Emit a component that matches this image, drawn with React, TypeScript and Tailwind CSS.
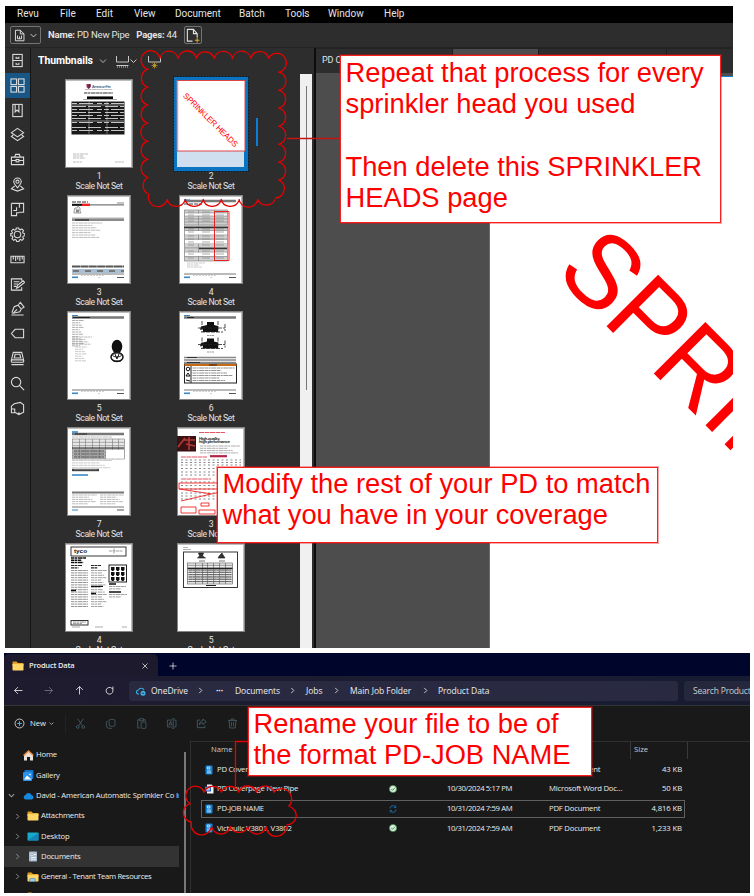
import React from "react";

type Kids = { children?: React.ReactNode };

const REVU = "font-[Roboto,'Liberation_Sans',sans-serif]";
const EXPL = "font-['Open_Sans','Noto_Sans',sans-serif]";
const NOTE = "font-['Liberation_Sans',Arial,sans-serif]";

/* ---------- rail icons ---------- */
const railIcons: React.ReactNode[] = [
  <><rect x="3" y="1.500" width="10" height="13" /><path d="M3 8h10M6.500 4v1.500h3V4M6.500 10.500V12h3v-1.500" /></>,
  <><rect x="1" y="1" width="6" height="6" /><rect x="9" y="1" width="6" height="6" /><rect x="1" y="9" width="6" height="6" /><rect x="9" y="9" width="6" height="6" /></>,
  <><rect x="3" y="1.500" width="10" height="13" /><path d="M5.500 1.500v8l2-2 2 2v-8" /></>,
  <><path d="M8 1.500 14.500 6 8 10.500 1.500 6Z" /><path d="m3.500 8.500-2 1.500L8 14.500l6.500-4.500-2-1.500" /></>,
  <><path d="M1.500 5.500h13v8h-13ZM5 5.500l1-3h4l1 3M1.500 9h5m3 0h5" /><rect x="6.500" y="8" width="3" height="2.500" /></>,
  <><path d="M8 11.500C5 8 4 6.800 4 5a4 4 0 0 1 8 0c0 1.800-1 3-4 6.500Z" /><circle cx="8" cy="5" r="1.700" /><path d="M5 9.500 1.500 12.500 8 15l6.500-2.500L11 9.500" /></>,
  <path d="M7 5.500V9H3.500M1.500 1.500h13v9.500H10M1.500 1.500v13H7V11.500h3M10 1.500V6" />,
  <><circle cx="8" cy="8" r="3.500" /><path d="m6.700 1-.3 1.800-1.500.6-1.500-1-1.800 1.900 1 1.500-.6 1.300L.8 7v2.400l1.700.3.600 1.300-1 1.500 1.800 1.800 1.500-1 1.300.600.400 1.500h2.500l.400-1.500 1.300-.6 1.500 1 1.800-1.800-1-1.500.6-1.300 1.600-.4V7l-1.700-.3-.6-1.300 1-1.500L12.600 2l-1.500 1-1.400-.6L9.300 1Z" /></>,
  <path d="M1 4.500h14v7H1ZM3.500 4.500v3.500M6 4.500v5M8.300 4.500v3.500M10.500 4.500v5M13 4.500v3.500" />,
  <><path d="M12.500 4V2h-11v12h11V11M4 5h6M4 7.500h4.500M4 10h3" /><path d="m7 12 1-3 6-5 1.500 1.700-6 5Z" /></>,
  <path d="M1.500 15h13M2 12.500l2.500-6.500 4-1.500 3.500 4-1.500 3-7 1.500 4-4M9 4l2-2.500 4 5-2.500 1.500" />,
  <path d="M5.500 3.500h9v9h-9L1.500 8Z" />,
  <><path d="M3.500 1.500h9l2 8h-13ZM1.500 12h13M1.500 14.500h13" /><path d="M5.500 3.500h5l1 4h-7ZM1.500 9.500V12m13-2.500V12" /></>,
  <><circle cx="6.500" cy="6.500" r="5" /><path d="m10 10 5 5" /></>,
  <path d="M1.500 13V8.500H5V12l4.500 2.500 5-2.500V4L11 1.500 4.500 3 1.500 5.500v3M5 12.500H1.500M9.500 14.500V12" />,
];

const Ico = ({ s = 16, children, className = "" }: Kids & { s?: number; className?: string }) => (
  <svg width={s} height={s} viewBox="0 0 16 16" fill="none" stroke="currentColor" strokeWidth="1.150" className={"shrink-0 " + className}>
    {children}
  </svg>
);

/* ---------- page thumbnails ---------- */
type TL = { x: number; y: number; w: number; n: number; gap?: number; c?: string; h?: number; jag?: boolean };
const Txt = ({ x, y, w, n, gap = 2.4, c = "#8a8a8a", h = 0.8, jag = true }: TL) => (
  <g stroke={c} strokeWidth={h} strokeDasharray="3.5 .5 2 .6 5 .5">
    {Array.from({ length: n }, (_, i) => (
      <path key={i} d={`M${x} ${y + i * gap}h${jag ? w * (1 - ((i * 37) % 10) / 22) : w}`} />
    ))}
  </g>
);
const Table = ({ x, y, w, h, rows, cols, fill = "#d0d0d0", c = "#777" }: { x: number; y: number; w: number; h: number; rows: number; cols: number[]; fill?: string; c?: string }) => (
  <g>
    <rect x={x} y={y} width={w} height={h} fill={fill} stroke={c} strokeWidth=".6" />
    {Array.from({ length: rows - 1 }, (_, i) => (
      <path key={i} d={`M${x} ${y + ((i + 1) * h) / rows}h${w}`} stroke={c} strokeWidth=".6" />
    ))}
    {cols.map((k) => <path key={k} d={`M${x + k} ${y}v${h}`} stroke={c} strokeWidth=".6" />)}
  </g>
);
const Foot = () => (
  <g>
    <path d="M5 79h52" stroke="#777" strokeWidth="1" />
    <path d="M5 82.300h6" stroke="#3b86c8" strokeWidth="1.600" />
    <path d="M14 80.500h24M31 82.500h2" stroke="#bbb" strokeWidth=".7" strokeDasharray="2 1" />
    <path d="M50 82.500h7" stroke="#555" strokeWidth="1" />
  </g>
);

const Page = ({ w, children }: Kids & { w: number }) => (
  <svg width={w} height="89" viewBox={`0 0 ${w} 89`} className="block">
    <rect x=".5" y=".5" width={w - 1} height="88" fill="#bdbdbd" stroke="#858585" />
    <rect x="1" y="2" width={w - 3} height="86" fill="#fff" />
    {children}
  </svg>
);

const pages: React.ReactNode[] = [
  <Page w={68}>
    <path d="M21.500 5h4v3l-2 2-2-2Z" fill="#b24" /><path d="M23.500 5h2v3l-2 2" fill="#336" />
    <text x="27" y="9" fontSize="4" className={NOTE} fill="#25436b" textLength="19">American Fire</text>
    <Txt x={20} y={10.500} w={27} n={1} c="#aaa" jag={false} />
    <Txt x={19} y={14} w={29} n={1} c="#333" jag={false} h={1} />
    <path d="M22 18.700h26" stroke="#000" strokeWidth="2.500" /><path d="M18 20.500h34" stroke="#777" strokeWidth=".6" />
    <rect x="6.500" y="22.500" width="53" height="33" fill="#1a1a1a" />
    <g stroke="#c4c4c4" strokeWidth="1">
      {[24.500, 27.500, 30.500, 33.500, 36.500, 39.500, 43.500, 48.500, 51.500].map((y, i) => <path key={y} d={`M7 ${y}h52`} strokeDasharray={i % 2 ? "14 2 13 4 13 2" : "5 2 14 4 5 2"} />)}
      <path d="M24 23v32M42 23v32" strokeWidth=".5" />
    </g>
    <path d="M7 26h52M7 42h52" stroke="#888" strokeWidth="1" />
    <Txt x={8} y={75} w={15} n={3} c="#aaa" gap={2} /><Txt x={8} y={83} w={9} n={1} c="#aaa" /><Txt x={50} y={83} w={9} n={1} c="#aaa" />
  </Page>,
  null,
  <Page w={64}>
    <path d="M5 7h16" stroke="#333" strokeWidth="1.200" strokeDasharray="4 1" /><path d="M5 9.800h52" stroke="#777" strokeWidth="1.200" /><path d="M5 9.800h10" stroke="#111" strokeWidth="2" /><path d="M15 9.800h8" stroke="#e22" strokeWidth="2.400" />
    <path d="M50 8h7" stroke="#888" /><path d="M7 18v-2l1-3h2l1-2 2 2v3l1 2Z" fill="#eee" stroke="#777" strokeWidth=".7" /><path d="M9 14.500h3v3H9Z" fill="#888" />
    <path d="M5 23.200h52" stroke="#888" strokeWidth="1" /><path d="M5 25h52" stroke="#8a8a8a" strokeWidth="1.800" /><path d="M8 25h14" stroke="#111" />
    <Txt x={5} y={28} w={30} n={7} c="#aaa" />
    <path d="M5 71.500h52" stroke="#555" strokeWidth="2" strokeDasharray="8 .4" />
    <path d="M5 76h52" stroke="#a8bfd6" strokeWidth="4" /><path d="M6 76h51" stroke="#777" strokeWidth="2" strokeDasharray="6 6" />
    <Foot />
  </Page>,
  <Page w={64}>
    <path d="M5 6h52" stroke="#777" strokeWidth="2.400" /><path d="M5 5h6" stroke="#3b86c8" strokeWidth="1.200" /><path d="M5 9h18" stroke="#444" strokeDasharray="4 1" />
    <Table x={5.500} y={15} w={43} h={15} rows={5} cols={[14, 30]} /><Table x={5.500} y={31} w={43} h={35} rows={8} cols={[14, 30]} />
    <g fill="#fff"><rect x="6" y="18.500" width="42" height="2" /><rect x="6" y="36" width="42" height="3.500" /><rect x="6" y="45" width="42" height="3.500" /><rect x="6" y="57.500" width="42" height="3.500" /></g>
    <g stroke="#888" strokeWidth=".7">{[17, 20, 23, 26, 34, 37, 41, 44, 47, 50, 56, 59, 63].map((y) => <path key={y} d={`M9 ${y}h38`} strokeDasharray="6 8 8 6 8 5" />)}</g>
    <path d="M5 32.500h44M20 53.500h28" stroke="#333" strokeWidth="1.300" />
    <path d="M35.500 16.500h14.500v49h-14.500Z" fill="none" stroke="#e11" strokeWidth=".9" />
    <Txt x={8} y={68} w={18} n={3} c="#bbb" gap={2} /><Foot />
  </Page>,
  <Page w={64}>
    <path d="M5 6.500h52" stroke="#777" strokeWidth="2.400" /><path d="M6 6.500h17" stroke="#222" /><path d="M5 4.500h6" stroke="#3b86c8" strokeWidth="1" />
    <Txt x={5} y={9.500} w={12} n={12} c="#999" gap={2.300} /><Txt x={5} y={26} w={20} n={4} c="#aaa" /><Txt x={8} y={36} w={12} n={7} c="#bbb" gap={2.300} />
    <ellipse cx="50" cy="35.500" rx="5.300" ry="6.800" fill="#111" /><ellipse cx="50" cy="46" rx="6" ry="4.500" fill="#fff" stroke="#111" strokeWidth="1.500" /><ellipse cx="50" cy="44" rx="4.500" ry="2" fill="none" stroke="#333" /><path d="M46 50h8M48 43l2 5 2-5" stroke="#111" fill="none" />
    <Foot />
  </Page>,
  <Page w={64}>
    <path d="M5 6.500h52" stroke="#777" strokeWidth="2.400" /><path d="M8 6.500h7" stroke="#222" /><path d="M5 4.500h6" stroke="#3b86c8" />
    {[10, 26.500].map((y) => <g key={y} transform={`translate(0 ${y})`}><path d="M22 5.500 28 4V1h7v3l4 1v6H24V8l-3 1Z" fill="#111" /><path d="M19 7h27M23 0v11M39 0v11M22 11h22M46 3v7" stroke="#222" strokeWidth=".8" strokeDasharray="4 1" /><path d="M28 14.500h7" stroke="#999" strokeDasharray="2 .5" /></g>)}
    <path d="M5 46.500h52M5 49h52M5 51.500h52" stroke="#888" strokeWidth="1.400" /><path d="M8 46.500h10M8 51.500h13" stroke="#333" />
    <rect x="5.500" y="53" width="52" height="19" fill="#fff" stroke="#222" /><path d="M5.500 54h52" stroke="#c56a15" strokeWidth="2" /><path d="M30 54h8" stroke="#321" /><path d="M12 55v17" stroke="#222" />
    <circle cx="9" cy="58" r="1.800" fill="none" stroke="#111" /><path d="m7 65 2-3 2 3Zm0 4 4 1" stroke="#111" fill="none" />
    <Txt x={13.500} y={57} w={42} n={6} gap={2.500} c="#777" /><Foot />
  </Page>,
  <Page w={64}>
    <path d="M5 7h52" stroke="#777" strokeWidth="2.400" /><path d="M8 7h12" stroke="#222" strokeDasharray="3 .4" /><path d="M5 5h6M5 48h16" stroke="#2e84c9" strokeWidth="1.300" />
    <Txt x={5} y={10} w={40} n={1} c="#aaa" />
    <Table x={5.500} y={12} w={52} h={20} rows={6} cols={[7, 13, 20, 27, 33, 40, 46]} fill="#e8e8e8" /><rect x="5.500" y="22" width="33" height="10" fill="#999" opacity=".6" /><rect x="39" y="23" width="18" height="8.500" fill="#fff" />
    <path d="M5 21h52" stroke="#222" /><Txt x={7} y={24} w={30} n={3} gap={3} c="#333" jag={false} /><Txt x={5} y={33.500} w={40} n={4} c="#bbb" />
    <path d="M5 43h27" stroke="#444" strokeWidth="2.400" /><path d="M7 42h23" stroke="#ddd" strokeWidth=".6" />
    <path d="M5 65.500h52" stroke="#777" strokeWidth="2" /><Txt x={5} y={68} w={25} n={5} gap={2.200} c="#aaa" /><Txt x={33} y={68} w={24} n={5} gap={2.200} c="#aaa" />
    <path d="M5 80h52" stroke="#777" /><path d="M5 83h6" stroke="#3b86c8" /><path d="M50 83h7" stroke="#555" />
  </Page>,
  <Page w={68}>
    <path d="M22 5.500h26M4 30h26M4 52h30" stroke="#d45" strokeWidth=".9" strokeDasharray="5 .5" />
    <rect x="0" y="9" width="19" height="15.500" fill="#3a1214" /><path d="m1 20 7-9M6 13h12M9 17l9 2M12 10v13" stroke="#b33a3a" strokeWidth="1.600" fill="none" />
    <text x="22" y="12.800" fontSize="4.200" fontWeight="700" className={NOTE} fill="#222" textLength="21">High-quality,</text>
    <text x="22" y="16.300" fontSize="4.200" fontWeight="700" className={NOTE} fill="#222" textLength="31">high performance</text>
    <Txt x={23} y={19} w={40} n={4} gap={2.300} c="#999" /><path d="M33 29.200h17" stroke="#b22345" strokeWidth="2.200" />
    <g stroke="#888" strokeWidth="1" strokeDasharray="2 2.500">{[33, 35.500, 38, 41.500, 45, 48, 55, 58.500, 62, 66, 69, 72].map((y) => <path key={y} d={`M4 ${y}h60`} />)}</g>
    <path d="M2 56h62v6H2ZM2 62l33 5 30-8M4 74l30-7M4 80h15v6H4ZM22 83h16v4H22Zm2-7h8v3h-8Z" stroke="#e22" strokeWidth=".9" fill="none" />
  </Page>,
  <Page w={68}>
    <rect x="6" y="4" width="55" height="9" fill="#fff" stroke="#222" strokeWidth=".9" />
    <text x="9" y="10" fontSize="6" fontWeight="700" className={NOTE} fill="#111" textLength="13" lengthAdjust="spacingAndGlyphs">tyco</text>
    <path d="M44 8h14M49 5.500v5" stroke="#888" strokeWidth=".8" strokeDasharray="3 .5" />
    <Txt x={6} y={15} w={15} n={3} gap={2.300} c="#111" h={1.500} />
    <Txt x={6} y={22.500} w={11} n={2} gap={2.300} c="#222" h={1.200} /><Txt x={26} y={22.500} w={10} n={2} gap={2.300} c="#222" h={1.200} />
    <Txt x={6} y={27.500} w={17} n={16} gap={2.400} c="#777" jag={false} /><Txt x={26} y={27.500} w={16} n={16} gap={2.400} c="#888" />
    <path d="M6 47.500h5M26 43.300h12M26 50.500h5M44 41h7M44 49h12" stroke="#111" strokeWidth="1.300" />
    <rect x="44" y="22" width="17.500" height="17" fill="#fff" stroke="#222" /><g fill="#111">{[0, 1, 2].flatMap((r) => [0, 1, 2].map((k) => <path key={`${r}${k}`} d={`M${46 + k * 5} ${24 + r * 5}h3.500v2.500l-1 1.500h-1.500l-1-1.500Z`} />))}</g>
    <Txt x={44} y={43.500} w={17} n={2} c="#888" /><Txt x={44} y={51.500} w={18} n={2} c="#888" />
    <rect x="6" y="77.500" width="17" height="4.500" fill="#fff" stroke="#222" strokeWidth=".9" /><Txt x={8} y={79} w={13} n={2} gap={1.600} c="#777" /><path d="M7 84h8M30 84h8M57 84h5" stroke="#888" strokeWidth=".7" />
  </Page>,
  <Page w={68}>
    <path d="M6 4.500h5M6 6.500h8" stroke="#999" strokeWidth=".7" /><rect x="6.500" y="9" width="54" height="35.500" fill="#fff" stroke="#222" strokeWidth=".9" />
    <path d="m20.500 15 2-2-1-3h5l-1 3 3 2ZM41 15l2-3 2-2 1 2 2 3Z" fill="#333" stroke="#111" strokeWidth=".6" /><path d="M22 18h6M42 18h6" stroke="#555" strokeWidth=".8" />
    <Table x={10.500} y={20} w={45} h={21} rows={9} cols={[8, 15, 20, 26, 32, 38]} fill="#eee" c="#555" /><Txt x={12} y={27} w={42} n={6} gap={2.300} c="#555" jag={false} /><path d="M10.500 25.500h45M29 42.500h10" stroke="#222" />
  </Page>,
];

const SelectedPage = () => (
  <svg width="76" height="96" viewBox="0 0 76 96" className="block shrink-0">
    <rect x=".5" y=".5" width="75" height="95" fill="#0a74c2" stroke="#161616" strokeDasharray="2 1" />
    <rect x="4" y="4" width="67" height="87" fill="#d0dff0" />
    <rect x="4" y="4" width="68" height="71" fill="#fff" />
    <path d="M4.500 4v71" stroke="#f88" strokeWidth="1.500" /><path d="M4 4.500h68V75H4" stroke="#d44" fill="none" />
    <text x="0" y="0" transform="translate(9.500 20.300) rotate(44.500)" fontSize="8.200" fill="#f00" textLength="73" className={NOTE}>SPRINKLER HEADS</text>
  </svg>
);

const labels = ["1", "2", "3", "4", "5", "6", "7", "3", "4", "5"];

const RevuWindow = () => (
  <section className={"ml-[5px] flex h-[642px] w-[728px] shrink-0 flex-col overflow-hidden bg-[#2d2d2d] text-[10px] text-[#e4e4e4] " + REVU}>
    <nav className="flex h-[17px] shrink-0 items-center bg-black pb-[2px] pl-3">
      <span className="w-[43px]">Revu</span><span className="w-[36px]">File</span><span className="w-[38px]">Edit</span><span className="w-[41px]">View</span>
      <span className="w-[64px]">Document</span><span className="w-[46px]">Batch</span><span className="w-[43px]">Tools</span><span className="w-[56px]">Window</span><span>Help</span>
    </nav>
    <div className="flex h-[25px] shrink-0 items-center border-b border-[#232323] pl-[5px]">
      <div className="flex h-[18px] w-[31px] items-center justify-between rounded-[2px] border border-[#737373] px-[2px]">
        <Ico s={13}><path d="M3 1.500h6L13.500 6v8.500H3ZM9 1.500V6h4.500M5.500 8v4h5V8M8 9v3" /></Ico>
        <Ico s={9}><path d="m3 5.500 5 5 5-5" strokeWidth="1.500" /></Ico>
      </div>
      <span className="ml-[7px] text-[9.500px] tracking-[-0.200px]"><b className="font-bold">Name:</b> PD New Pipe</span>
      <span className="ml-[7px] text-[9.500px] tracking-[-0.200px]"><b className="font-bold">Pages:</b> 44</span>
      <div className="ml-[7px] flex h-[18px] w-[18px] items-center justify-center rounded-[2px] border border-[#737373]">
        <Ico s={15}><path d="M8 14H2.500V1.500H9L13 6v4M9 1.500V6h4" /><path d="M10.500 13h5M13 10.500v5" stroke="#d8ac22" /></Ico>
      </div>
    </div>
    <div className="flex min-h-0 flex-1">
      <aside className="flex w-[25px] shrink-0 flex-col">
        {railIcons.map((ic, i) => (
          <div key={i} className={"flex h-[24.850px] shrink-0 items-center justify-center pr-px text-[#dcdcdc] " + (i === 1 ? "bg-[#175685]" : "")}>
            <Ico s={15}>{ic}</Ico>
          </div>
        ))}
      </aside>
      <div className="w-px shrink-0 bg-[#151515]" />
      <div className="w-[269px] shrink-0">
        <div className="flex h-[26px] items-center pl-[7px]">
          <b className="text-[10.500px] font-bold tracking-[-0.080px] text-white">Thumbnails</b>
          <Ico s={8} className="ml-[6px]"><path d="m2 5 6 6 6-6" strokeWidth="1.500" /></Ico>
          <svg width="46" height="16" viewBox="0 0 46 16" fill="none" stroke="#c8c8c8" className="ml-[8px]">
            <path d="M1.500 3v6h12V3M1.500 12.500h12" /><path d="M2 14h11" strokeDasharray="1 1" /><path d="m15.500 6.500 3 3 3-3" />
            <path d="M33.500 3v6h12V3" /><path d="M36.500 12.500h6M39.500 9.500v6M37.500 10.500l4 4M41.500 10.500l-4 4" stroke="#c8a028" strokeWidth=".8" />
          </svg>
        </div>
        <div className="grid grid-cols-[112px_112px] pl-[12px] pt-[5px]">
          {labels.map((n, i) => (
            <div key={i} className="flex h-[116px] flex-col items-center">
              <div className="flex h-[89px] items-center justify-center overflow-visible">{i === 1 ? <SelectedPage /> : pages[i]}</div>
              <div className="mt-[3px] text-center text-[8.700px] leading-[10px] tracking-[-0.400px]">{n}<br />Scale Not Set</div>
            </div>
          ))}
        </div>
      </div>
      <div className="mt-[26px] w-[12px] shrink-0 bg-[#f0f0f0] pl-[6px] pt-[12px]"><div className="h-[304px] w-px bg-[#777]" /></div>
      <div className="flex w-[4px] shrink-0 pl-[2px]"><div className="w-[2px] bg-[#0d0d0d]" /></div>
      <main className="flex min-w-0 flex-1 flex-col bg-[#4d4d4d]">
        <div className="flex h-[25px] shrink-0 gap-px border-t border-[#232323] bg-[#1e1e1e] text-[9px] leading-[23px]">
          <div className="w-[136px] bg-[#2d2d2d] pl-[6px] tracking-[-0.100px]">PD C</div><div className="w-[85px] bg-[#4d4d4d]" /><div className="w-[127px] bg-[#2d2d2d]" /><div className="flex-1 bg-[#2d2d2d]" />
        </div>
        <div className="ml-[173px] mt-[3px] flex-1 border-l border-t border-[#1584d8] bg-white">
          <svg width="243" height="571" viewBox="490 77 243 571" className="block">
            <text transform="translate(553.700 273.400) rotate(45) scale(1 1.060)" fontSize="100" fill="#f00" className={NOTE}>SPRIN</text>
          </svg>
        </div>
      </main>
    </div>
  </section>
);

/* ---------- file explorer ---------- */
const Folder = () => (
  <svg width="12" height="10" viewBox="0 0 12 10" className="shrink-0"><path d="M.5 1q0-.5.5-.5h3.500L6 2h5q.5 0 .5.500V5H.5Z" fill="#dd9c1c" /><rect x=".5" y="2.800" width="11" height="6.700" rx=".7" fill="#ffd769" /></svg>
);
const Pdf = () => (
  <svg width="8" height="10" viewBox="0 0 8 10" className="shrink-0"><rect x=".5" y=".5" width="7" height="9" rx="1" fill="#1583d8" /><path d="M2.500 2h2.300v2H2.500ZM2 6h4M2 7.800h4" stroke="#d9f0ff" strokeWidth=".8" fill="none" /></svg>
);
const Word = () => (
  <svg width="9" height="10" viewBox="0 0 9 10" className="shrink-0"><path d="M2 .5h4.500L8.500 2.500v7H2Z" fill="#f4f4f4" /><rect x="0" y="2.500" width="6" height="5" fill="#2458b8" /><path d="m1 3.500 1 3 1-3 1 3 1-3" stroke="#fff" strokeWidth=".7" fill="none" /></svg>
);
const Check = () => (
  <svg width="8" height="8" viewBox="0 0 8 8"><circle cx="4" cy="4" r="3.600" fill="#d9efdc" stroke="#3c8d4c" strokeWidth=".7" /><path d="m2.300 4 1.300 1.300 2.300-2.500" stroke="#27783a" strokeWidth=".8" fill="none" /></svg>
);
const Sync = () => (
  <svg width="8" height="8" viewBox="0 0 8 8" fill="none" stroke="#1a78c2" strokeWidth=".8"><path d="M1 3.500A3 3 0 0 1 6.500 2M7 4.500A3 3 0 0 1 1.500 6M6.800.5v2H5M1.200 7.500v-2H3" /></svg>
);
const Chev = ({ down = false, className = "text-[#999]" }: { down?: boolean; className?: string }) => (
  <Ico s={7} className={className}>{down ? <path d="m2 5 6 6 6-6" strokeWidth="2.500" /> : <path d="m5 2 6 6-6 6" strokeWidth="2" />}</Ico>
);

const side: { name: string; icon: React.ReactNode; lvl: number; on?: boolean; tight?: boolean }[] = [
  { name: "Home", lvl: 0, icon: <svg width="11" height="11" viewBox="0 0 11 11"><path d="M1 5 5.500 1 10 5v5.500H7V7H4v3.500H1Z" fill="#e8e0d8" /><path d="M.5 5.500 5.500 1l5 4.500" stroke="#e98235" strokeWidth="1.500" fill="none" /></svg> },
  { name: "Gallery", lvl: 0, icon: <svg width="11" height="11" viewBox="0 0 11 11"><rect x="1.500" y="0" width="9" height="9" rx="1" fill="#1372cc" /><rect x="0" y="2" width="9" height="9" rx="1" fill="#2c93ea" /><path d="m1 9.500 3-4 4.500 4Z" fill="#fff" /><circle cx="7" cy="4.500" r=".8" fill="#fff" /></svg> },
  { name: "David - American Automatic Sprinkler Co Inc", lvl: 1, icon: <svg width="11" height="8" viewBox="0 0 11 8"><path d="M2.500 7.500a2.300 2.300 0 0 1 0-4.500A3.200 3.200 0 0 1 8.500 3a2.300 2.300 0 0 1 .2 4.500Z" fill="#1689dc" /></svg> },
  { name: "Attachments", lvl: 2, icon: <Folder /> },
  { name: "Desktop", lvl: 2, icon: <svg width="12" height="9" viewBox="0 0 12 9"><rect x=".5" y=".5" width="11" height="8" rx=".7" fill="#18a9c8" /><path d="M.5 8.500 11.500 1v7.500Z" fill="#1584b8" /></svg> },
  { name: "Documents", lvl: 2, on: true, icon: <svg width="12" height="11" viewBox="0 0 12 11"><rect x="2" y=".5" width="8" height="10" rx=".8" fill="#a9bccf" /><path d="M4 4.500h2V3H4ZM7 3.500h2M4 6.500h5M4 8.300h5" stroke="#fff" strokeWidth=".8" /></svg> },
  { name: "General - Tenant Team Resources", lvl: 2, tight: true, icon: <span className="relative block"><Folder /><svg width="7" height="4" viewBox="0 0 7 4" className="absolute bottom-0 left-[2px]"><rect x=".5" y=".5" width="6" height="3" rx="1.500" fill="#9bd0f0" stroke="#3c7fa8" strokeWidth=".6" /></svg></span> },
  { name: "", lvl: 2, icon: <Folder /> },
];

const files = [
  { n: "PD Cover", i: <Pdf />, s: null, d: "", t: "PDF Document", k: "43 KB" },
  { n: "PD Coverpage New Pipe", i: <Word />, s: <Check />, d: "10/30/2024 5:17 PM", t: "Microsoft Word Doc...", k: "50 KB" },
  { n: "PD-JOB NAME", i: <Pdf />, s: <Sync />, d: "10/31/2024 7:59 AM", t: "PDF Document", k: "4,816 KB", on: true },
  { n: "Victaulic V3801, V3802", i: <Pdf />, s: <Check />, d: "10/31/2024 7:59 AM", t: "PDF Document", k: "1,233 KB" },
];

const Crumb = ({ children, w }: Kids & { w: string }) => <span className={"shrink-0 whitespace-nowrap " + w}>{children}</span>;
const Sep = ({ w }: { w: string }) => <Crumb w={w}><span className="inline-block"><Chev className="text-[#ddd]" /></span></Crumb>;
const tools = [
  <><path d="m4 1 6.500 10M12 1 5.500 11" /><circle cx="4" cy="13" r="2" /><circle cx="12" cy="13" r="2" /></>,
  <><rect x="6" y="2" width="8.500" height="10" rx="2" /><path d="M4 4.500a2 2 0 0 0-2 2V11a4 4 0 0 0 4 4h4" /></>,
  <><path d="M6 14.500H2.500v-12H5m6 0h2.500V5M5 1h6v3H5Z" /><rect x="7.500" y="6" width="7" height="9" rx="1" /></>,
  <><path d="M9 3H2v10h7m3-10h2.500v10H12M10.500 1v14M9 1h3M9 15h3M4 11l2.500-6L9 11M5 9h3" /></>,
  <><path d="M6 3H2v11h11v-3M10 1.500l5 4-5 4V7c-3 0-4 1-5 3 0-4 2-6 5-6Z" /></>,
  <path d="M1.500 3.500h13M6 3V1.500h4V3M3 3.500l1 11h8l1-11M6.500 6v6M9.500 6v6" />,
];

const Explorer = () => (
  <section className={"ml-[4px] mt-[5px] flex h-[240px] w-[746px] shrink-0 flex-col overflow-hidden bg-[#191919] text-[7.700px] text-[#ececec] " + EXPL}>
    <div className="flex h-[23px] shrink-0 items-end bg-[#00062b]">
      <div className="flex h-[22px] w-[154px] items-center rounded-t-[5px] bg-[#1d1a2e] pl-[8px] pt-[2px]">
        <Folder /><b className="ml-[5px] w-[112px] text-[7.500px] font-semibold tracking-[-0.180px]">Product Data</b><Ico s={8}><path d="m3 3 10 10M13 3 3 13" strokeWidth="1.500" /></Ico>
      </div>
      <Ico s={8} className="mb-[6px] ml-[11px]"><path d="M8 1v14M1 8h14" strokeWidth="1.500" /></Ico>
    </div>
    <div className="flex h-[30px] shrink-0 items-center border-b border-[#343434] bg-linear-to-r from-[#1f1b2f] to-[#171c33] pl-[10px] pr-0">
      <div className="flex w-[115px] items-center gap-[21.300px]">
        <Ico s={9}><path d="M15 8H1m6-6L1 8l6 6" strokeWidth="1.500" /></Ico>
        <Ico s={9} className="text-[#77758a]"><path d="M1 8h14M9 2l6 6-6 6" strokeWidth="1.500" /></Ico>
        <Ico s={9}><path d="M8 15V1M2 7l6-6 6 6" strokeWidth="1.500" /></Ico>
        <Ico s={9}><path d="M14 5v4a6 6 0 1 1-2-5l2 1V1" strokeWidth="1.500" /></Ico>
      </div>
      <div className="flex h-[20px] w-[549px] shrink-0 items-center rounded-[3px] bg-[#292a41] pl-[7px] pt-px text-[8.500px] tracking-[-0.050px]">
        <svg width="10" height="9" viewBox="0 0 10 9" className="mr-[5px] shrink-0"><path d="M3 7H2.500a2 2 0 0 1 0-4A3 3 0 0 1 8 3" stroke="#37aee6" strokeWidth="1.100" fill="none" /><circle cx="7" cy="6.200" r="2.500" fill="#43b4e9" /><path d="M5.800 6.200h2.400" stroke="#124" strokeWidth=".8" /></svg>
        <Crumb w="w-[46px]">OneDrive</Crumb><Sep w="w-[19px]" /><Crumb w="w-[19px]"><b>···</b></Crumb>
        <Crumb w="w-[54px]">Documents</Crumb><Sep w="w-[17px]" />
        <Crumb w="w-[27px]">Jobs</Crumb><Sep w="w-[17px]" />
        <Crumb w="w-[72px]">Main Job Folder</Crumb><Sep w="w-[16px]" /><Crumb w="">Product Data</Crumb>
      </div>
      <div className="ml-[6px] h-[20px] flex-1 overflow-hidden whitespace-nowrap rounded-l-[3px] bg-[#25283c] pl-[9px] text-[8.500px] leading-[20px] tracking-[-0.200px] text-[#ccc]">Search Product</div>
    </div>
    <div className="flex h-[35px] shrink-0 items-center pl-[10px]">
      <Ico s={11}><circle cx="8" cy="8" r="6.500" /><path d="M8 4.500v7M4.500 8h7" stroke="#48b8ed" strokeWidth="1.300" /></Ico>
      <span className="ml-[5px] mr-[3px]">New</span><Ico s={5}><path d="m2 5 6 6 6-6" strokeWidth="2" /></Ico>
      <div className="ml-[11px] mr-[9px] h-[20px] w-px bg-[#222]" />
      <div className="flex gap-[19.300px] text-[#476270]">{tools.map((t, i) => <Ico key={i} s={11}>{t}</Ico>)}</div>
    </div>
    <div className="flex min-h-0 flex-1">
      <aside className="w-[175px] shrink-0 pt-[4px]">
        {side.map((r, i) => (
          <div key={i} className={"flex h-[20.300px] items-center overflow-hidden whitespace-nowrap pl-[4px] " + (r.on ? "bg-[#333]" : "")}>
            <span className={"shrink-0 " + (r.lvl === 2 ? "ml-[6px] w-[13px]" : "w-[14px]")}>{r.lvl > 0 && r.name && <Chev down={r.lvl === 1} />}</span>
            <span className="flex w-[12px] shrink-0 justify-center">{r.icon}</span>
            <span className={"ml-[2px] shrink-0 " + (r.tight ? "tracking-[-0.330px]" : "tracking-[-0.180px]")}>{r.name}</span>
          </div>
        ))}
      </aside>
      <div className="ml-[5px] mt-[11px] w-[2px] shrink-0 bg-[#777]" />
      <div className="ml-[4px] min-w-0 flex-1 border-l border-t border-[#303030]">
        <div className="flex h-[17px] items-center text-[#ccc]">
          <span className="w-[439px] pb-[2px] pl-[20px]">Name</span>
          <span className="flex h-[17px] w-[58px] items-center border-x border-[#3a3a3a] pb-[2px] pl-[3px]">Size</span>
        </div>
        <div className="flex flex-col gap-[1.650px] pt-[1.500px]">
          {files.map((f) => (
            <div key={f.n} className={"ml-[10px] flex h-[18px] w-[484px] items-center whitespace-nowrap border " + (f.on ? "border-[#606060]" : "border-transparent")}>
              <span className="flex w-[15px] pl-[3px]">{f.i}</span><span className="w-[172px] tracking-[-0.240px]">{f.n}</span><span className="flex w-[58px]">{f.s}</span>
              <span className="w-[102px] tracking-[-0.360px]">{f.d}</span><span className="w-[90px] tracking-[-0.200px]">{f.t}</span><span className="flex-1 pr-[2px] text-right tracking-[-0.100px]">{f.k}</span>
            </div>
          ))}
        </div>
      </div>
    </div>
  </section>
);

/* ---------- red markup laid over both windows ---------- */
type P = [number, number];
const top1: P[] = [[160, 59], [178.300, 59], [196.700, 59], [214.500, 59], [232.700, 59], [251, 59], [269, 59]];
const right1: P[] = [[278.300, 72.300], [278.300, 90.500], [278.300, 108.500], [278.300, 126.500], [278.300, 144.500], [278.300, 162.500], [278.300, 180.500], [275, 198]];
const bot1: P[] = [[257.500, 199], [239, 199], [221, 199], [203, 199], [185, 199], [167, 199], [149, 193.500]];
const left1: P[] = [[148.500, 177], [148.500, 159], [148.500, 141], [148.500, 122.800], [148.500, 104.800], [148.500, 86.800], [148.500, 69]];
const loop = (pts: P[], cx: number, cy: number, hx: number, hy: number, r: number, off: number) =>
  pts.map((p, i) => {
    const q = pts[(i + 1) % pts.length];
    const ox = Math.abs(p[0] - cx) > hx ? Math.sign(p[0] - cx) * off : 0;
    const oy = Math.abs(p[1] - cy) > hy ? Math.sign(p[1] - cy) * off : 0;
    return `M${p[0] + ox} ${p[1] + oy}A${r} ${r} 0 ${Math.abs(p[0] - q[0]) > 4 && Math.abs(p[1] - q[1]) > 9 ? 1 : 0} 1 ${q[0]} ${q[1]}`;
  }).join("");
const cloud1 = loop([...top1, ...right1, ...bot1, ...left1], 214, 129, 62, 68, 9.500, 1.500);
const cloud2 = loop([[204.300, 792.700], [221.700, 792.700], [239, 792.700], [256.700, 792.700], [274.300, 792.700], [288.500, 806.500], [286.500, 825], [266, 826], [247.500, 826], [230, 826], [211.500, 826], [191.500, 822], [190.800, 803.300]], 239, 810, 48, 14, 9.500, 1.200);

const Note = ({ lines, className }: { lines: string[]; className: string }) => (
  <div className={"absolute whitespace-nowrap border border-[#f52020] bg-white text-[27.300px] leading-[31.300px] text-[#f00] ring-1 ring-[#ff0000]/35 " + NOTE + " " + className}>
    {lines.map((l, i) => <p key={i} className="h-[31.300px] origin-[0_80%] scale-y-[1.040]">{l}</p>)}
  </div>
);

export default function App() {
  return (
    <div className="relative flex h-[896px] w-[754px] flex-col overflow-hidden bg-white pt-[6px]">
      <RevuWindow />
      <Explorer />
      <svg width="754" height="896" viewBox="0 0 754 896" fill="none" stroke="#e80000" strokeWidth="1.300" className="pointer-events-none absolute left-0 top-0">
        <path d={cloud1} /><path d={cloud2} />
        <path d="M287 138.500h53" stroke="#c41414" /><path d="M248 741.500h-12.500V787" />
        <path d="M257 118v28" stroke="#0a7fd8" strokeWidth="2" />
      </svg>
      <Note className="left-[340px] top-[55px] h-[168px] w-[381px] pl-[4.500px] pt-[1px]" lines={["Repeat that process for every", "sprinkler head you used", "", "Then delete this SPRINKLER", "HEADS page"]} />
      <Note className="left-[217px] top-[467px] h-[76px] w-[441px] pl-[4.500px]" lines={["Modify the rest of your PD to match", "what you have in your coverage"]} />
      <Note className="left-[248px] top-[707px] h-[69px] w-[344px] pl-[4.500px]" lines={["Rename your file to be of", "the format PD-JOB NAME"]} />
    </div>
  );
}
